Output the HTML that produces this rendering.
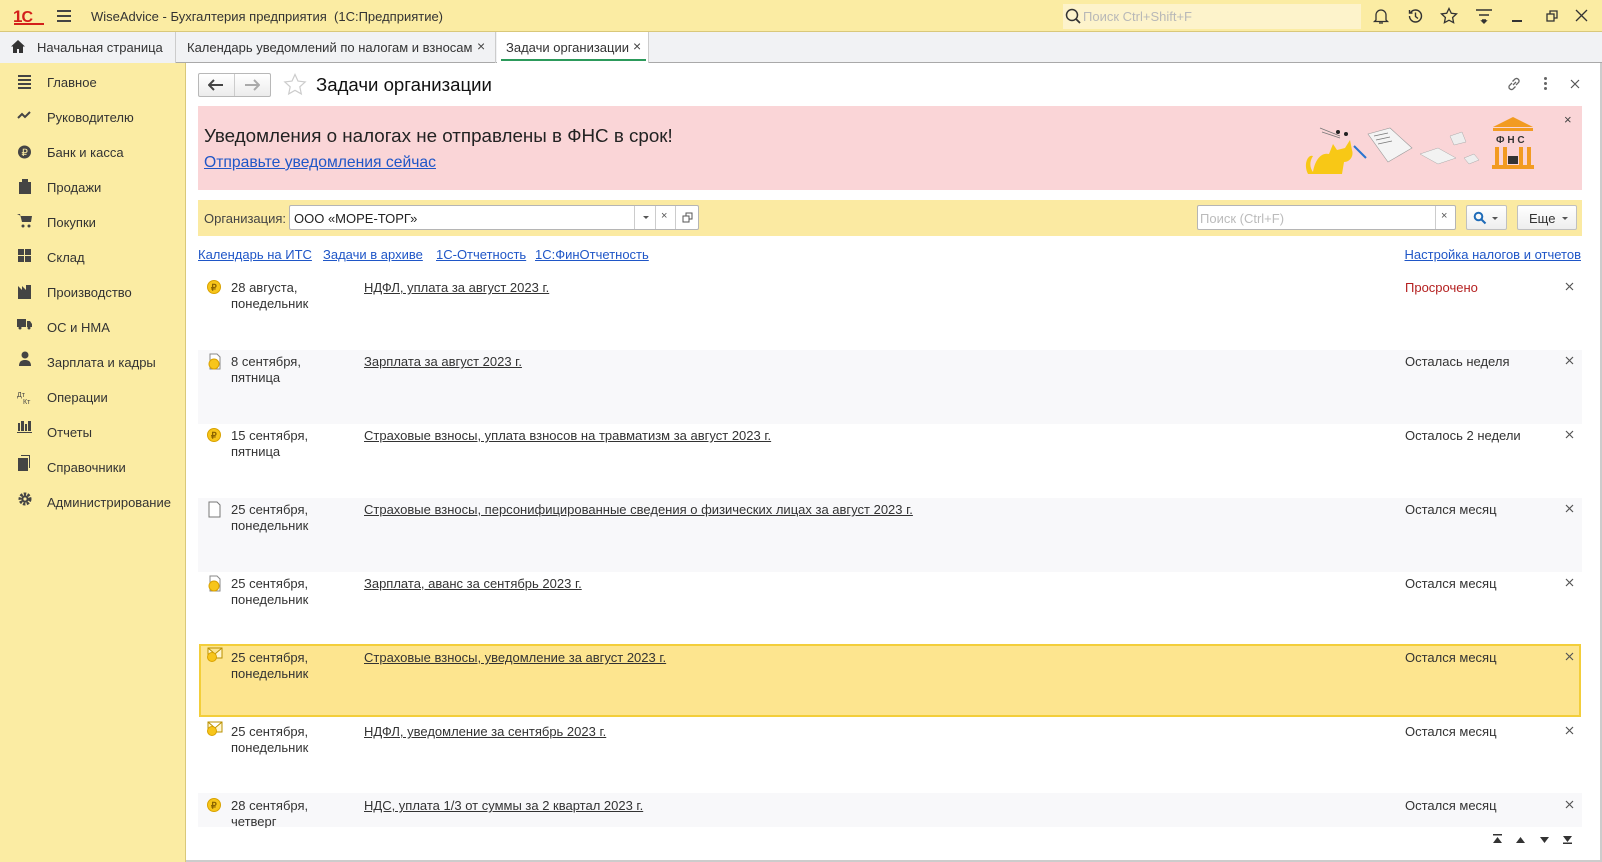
<!DOCTYPE html>
<html><head><meta charset="utf-8"><style>
*{margin:0;padding:0;box-sizing:border-box}
body{width:1602px;height:862px;overflow:hidden;background:#fff;font-family:"Liberation Sans","Noto Sans CJK SC",sans-serif;font-size:13px;color:#333;position:relative}
.a{position:absolute;white-space:nowrap}
a,.lk{color:#1f56c7;text-decoration:underline}
.ul{color:#333;text-decoration:underline}
svg{display:block}
</style></head><body>
<!-- top bar -->
<div class="a" style="left:0;top:0;width:1602px;height:32px;background:#fbeca3;border-bottom:1px solid #d9c87a"></div>
<div class="a" style="left:13px;top:7px;color:#d3201b;font-weight:bold;font-size:17px;letter-spacing:-1px">1<span style="font-size:16px">С</span></div>
<div class="a" style="left:14px;top:23px;width:30px;height:2px;background:#d3201b"></div>
<div class="a" style="left:57px;top:10px;width:14px;height:1.5px;background:#444;box-shadow:0 5px 0 #444,0 10px 0 #444"></div>
<div class="a" style="left:91px;top:9px;font-size:13px;color:#333">WiseAdvice - Бухгалтерия предприятия &nbsp;(1С:Предприятие)</div>
<div class="a" style="left:1063px;top:4px;width:298px;height:25px;background:#fdf3cb"></div>
<svg class="a" style="left:1065px;top:8px" width="16" height="16"><circle cx="7" cy="7" r="5.5" fill="none" stroke="#333" stroke-width="1.5"/><path d="M11 11L15 15" stroke="#333" stroke-width="1.8"/></svg>
<div class="a" style="left:1083px;top:9px;color:#b8b8b8;font-size:13px">Поиск Ctrl+Shift+F</div>
<svg class="a" style="left:1372px;top:7px" width="18" height="18" fill="none" stroke="#333" stroke-width="1.3"><path d="M4 13V8a5 5 0 0110 0v5l1.5 1.5h-13z M7 16h4"/></svg>
<svg class="a" style="left:1406px;top:7px" width="18" height="18" fill="none" stroke="#333" stroke-width="1.4"><path d="M3.5 9a6 6 0 106-6 6 6 0 00-5 2.7M3.5 3v3h3M9.5 5.5v4l2.5 2"/></svg>
<svg class="a" style="left:1440px;top:7px" width="18" height="18" fill="none" stroke="#333" stroke-width="1.3"><path d="M9 1.5l2.3 4.8 5.2.6-3.9 3.6 1 5.2L9 13.2l-4.6 2.5 1-5.2L1.5 6.9l5.2-.6z"/></svg>
<svg class="a" style="left:1475px;top:8px" width="18" height="16" fill="none" stroke="#333" stroke-width="1.4"><path d="M1 2h16M4 7h10M7 12h4"/><path d="M7 13l2 2 2-2z" fill="#333"/></svg>
<div class="a" style="left:1512px;top:20px;width:10px;height:1.5px;background:#333"></div>
<svg class="a" style="left:1546px;top:10px" width="12" height="12" fill="none" stroke="#333" stroke-width="1.3"><rect x="1" y="4" width="7" height="7"/><path d="M4 4V1h7v7H8"/></svg>
<svg class="a" style="left:1575px;top:9px" width="13" height="13" stroke="#333" stroke-width="1.3"><path d="M1 1l11 11M12 1L1 12"/></svg>
<!-- tabs -->
<div class="a" style="left:0;top:32px;width:1602px;height:31px;background:#f1f2f4;border-bottom:1px solid #a9a9a9"></div>
<div class="a" style="left:0;top:32px;width:176px;height:31px;border-right:1px solid #ccc;background:#f1f2f4"></div>
<svg class="a" style="left:11px;top:40px" width="14" height="13" fill="#333"><path d="M7 0L0 6.5h2V13h4V9h2v4h4V6.5h2z"/></svg>
<div class="a" style="left:37px;top:40px">Начальная страница</div>
<div class="a" style="left:176px;top:32px;width:320px;height:31px;border-right:1px solid #ccc"></div>
<div class="a" style="left:187px;top:40px">Календарь уведомлений по налогам и взносам</div>
<div class="a" style="left:477px;top:38px;font-size:14px;color:#444">×</div>
<div class="a" style="left:497px;top:32px;width:152px;height:31px;background:#fff;border-right:1px solid #ccc"></div>
<div class="a" style="left:501px;top:59px;width:145px;height:2px;background:#2c9a5b"></div>
<div class="a" style="left:506px;top:40px">Задачи организации</div>
<div class="a" style="left:633px;top:38px;font-size:14px;color:#444">×</div>
<!-- sidebar -->
<div class="a" style="left:0;top:63px;width:186px;height:799px;background:#fbeca3;border-right:1px solid #d9c87a"></div>
<div class="a" style="left:0;top:63px;width:186px;font-size:13px">
<div class="a" style="left:47px;top:12px">Главное</div>
<div class="a" style="left:47px;top:47px">Руководителю</div>
<div class="a" style="left:47px;top:82px">Банк и касса</div>
<div class="a" style="left:47px;top:117px">Продажи</div>
<div class="a" style="left:47px;top:152px">Покупки</div>
<div class="a" style="left:47px;top:187px">Склад</div>
<div class="a" style="left:47px;top:222px">Производство</div>
<div class="a" style="left:47px;top:257px">ОС и НМА</div>
<div class="a" style="left:47px;top:292px">Зарплата и кадры</div>
<div class="a" style="left:47px;top:327px">Операции</div>
<div class="a" style="left:47px;top:362px">Отчеты</div>
<div class="a" style="left:47px;top:397px">Справочники</div>
<div class="a" style="left:47px;top:432px">Администрирование</div>
</div>
<svg class="a" style="left:17px;top:74px" width="16" height="440" fill="#444">
<rect x="1" y="1" width="13" height="2"/><rect x="1" y="5" width="13" height="2"/><rect x="1" y="9" width="13" height="2"/><rect x="1" y="13" width="13" height="2"/>
<path d="M1 44l4-4 3 3 5-5" fill="none" stroke="#444" stroke-width="2"/>
<circle cx="7.5" cy="78" r="6.5"/><text x="4.5" y="82" font-size="10" fill="#fbeca3" font-family="Liberation Sans">₽</text>
<path d="M2 108h12v12H2z M5 108v-3h6v3"/>
<path d="M0 140h3l2 8h9l1-6H4" /><circle cx="6" cy="152" r="1.5"/><circle cx="12" cy="152" r="1.5"/>
<rect x="1" y="175" width="6" height="6"/><rect x="8" y="175" width="6" height="6"/><rect x="1" y="182" width="6" height="6"/><rect x="8" y="182" width="6" height="6"/>
<path d="M1 225V212l4 4v-4l4 4v-5h5v14z"/>
<path d="M0 245h9v8H0z M10 247h3l2 3v3h-5z"/><circle cx="3" cy="254" r="1.5"/><circle cx="12" cy="254" r="1.5"/>
<circle cx="8" cy="281" r="3.5"/><path d="M2 292c0-5 3-6 6-6s6 1 6 6z"/>
<text x="0" y="323" font-size="7" font-family="Liberation Sans">Дт</text><text x="6" y="330" font-size="7" font-family="Liberation Sans">Кт</text>
<path d="M1 357h2v-8h-2z M4 357h3v-10h-3z M8 357h2v-7h-2z M11 357h3v-10h-3z M0 358h15v1H0z"/>
<path d="M1 384h10v13H1z M4 381h9v13h-1V382H4z"/>
<circle cx="8" cy="425" r="5" fill="none" stroke="#444" stroke-width="3" stroke-dasharray="2.4 1.3"/><circle cx="8" cy="425" r="3.6"/><circle cx="8" cy="425" r="1.6" fill="#fbeca3"/>
</svg>
<!-- window header -->
<div class="a" style="left:198px;top:73px;width:73px;height:24px;border:1px solid #b8b8b8;border-radius:2px;background:linear-gradient(#fff,#ececec)"></div>
<div class="a" style="left:234px;top:74px;width:1px;height:22px;background:#ccc"></div>
<svg class="a" style="left:208px;top:79px" width="16" height="12"><path d="M1 6h14M6 1L1 6l5 5" fill="none" stroke="#444" stroke-width="2"/></svg>
<svg class="a" style="left:244px;top:79px" width="16" height="12"><path d="M1 6h14M10 1l5 5-5 5" fill="none" stroke="#aaa" stroke-width="2"/></svg>
<svg class="a" style="left:283px;top:73px" width="24" height="23"><path d="M12 1.5l3 6.6 7.2.8-5.4 4.9 1.5 7.1L12 17.3l-6.3 3.6 1.5-7.1L1.8 8.9 9 8.1z" fill="none" stroke="#ccc" stroke-width="1.2"/></svg>
<div class="a" style="left:316px;top:74px;font-size:18.6px;color:#111">Задачи организации</div>
<svg class="a" style="left:1506px;top:76px" width="16" height="16" fill="none" stroke="#666" stroke-width="1.3"><path d="M7 9l3-3M6 7L3.5 9.5a2.5 2.5 0 003.5 3.5L9.5 10.5M10 9l2.5-2.5A2.5 2.5 0 009 3L6.5 5.5"/></svg>
<div class="a" style="left:1544px;top:77px;width:3px;height:3px;background:#666;border-radius:50%;box-shadow:0 5px 0 #666,0 10px 0 #666"></div>
<svg class="a" style="left:1570px;top:79px" width="10" height="10" stroke="#555" stroke-width="1.2"><path d="M1 1l8 8M9 1L1 9"/></svg>
<!-- banner -->
<div class="a" style="left:198px;top:106px;width:1384px;height:84px;background:#fad5d7"></div>
<div class="a" style="left:204px;top:125px;font-size:18.8px;color:#222">Уведомления о налогах не отправлены в ФНС в срок!</div>
<div class="a lk" style="left:204px;top:154px;font-size:15.7px">Отправьте уведомления сейчас</div>
<div class="a" style="left:1564px;top:112px;font-size:13px;color:#444">×</div>
<svg class="a" style="left:1300px;top:116px" width="245" height="68">
<path d="M8 58c-5-10 0-20 5-18-4 6-3 12 0 16 2-12 8-20 16-18l4-10 4 6 8-2 5-8 2 10c2 6-2 12-8 12l-2 12H8z" fill="#f8c816"/>
<circle cx="38" cy="16" r="2" fill="#222"/><circle cx="46" cy="18" r="2" fill="#222"/>
<path d="M20 12l20 8M22 16l18 6" stroke="#777" stroke-width=".7"/>
<path d="M68 18l22-6 22 20-24 14z" fill="#f4f4f4" stroke="#999" stroke-width=".6"/>
<path d="M74 20l14-3M76 24l14-3M78 28l14-3" stroke="#777" stroke-width=".7"/>
<path d="M54 30l12 12" stroke="#2a74d0" stroke-width="2"/>
<path d="M120 38l18-6 18 10-18 6z" fill="#f2f2f2" stroke="#aaa" stroke-width=".5"/>
<path d="M150 20l12-4 4 10-12 3z" fill="#eee" stroke="#aaa" stroke-width=".5"/>
<path d="M164 42l10-4 5 6-10 4z" fill="#eee" stroke="#aaa" stroke-width=".5"/>
<path d="M193 11l20-10 20 10z" fill="#f29b21"/>
<rect x="193" y="12" width="40" height="3" fill="#f29b21"/>
<text x="196" y="27" font-size="10" font-weight="bold" fill="#333" font-family="Liberation Sans">Ф Н С</text>
<rect x="195" y="31" width="4" height="18" fill="#f29b21"/><rect x="203" y="31" width="4" height="18" fill="#f29b21"/><rect x="219" y="31" width="4" height="18" fill="#f29b21"/><rect x="227" y="31" width="4" height="18" fill="#f29b21"/>
<path d="M208 40h10v8h-10z" fill="#333"/>
<rect x="192" y="49" width="42" height="4" fill="#f29b21"/>
</svg>
<!-- filter bar -->
<div class="a" style="left:198px;top:200px;width:1384px;height:36px;background:#fbeaa2"></div>
<div class="a" style="left:204px;top:211px;color:#444">Организация:</div>
<div class="a" style="left:289px;top:205px;width:410px;height:25px;background:#fff;border:1px solid #b5b5b5;border-radius:2px"></div>
<div class="a" style="left:294px;top:211px;color:#222">ООО «МОРЕ-ТОРГ»</div>
<div class="a" style="left:634px;top:206px;width:1px;height:23px;background:#ccc"></div>
<div class="a" style="left:655px;top:206px;width:1px;height:23px;background:#ccc"></div>
<div class="a" style="left:675px;top:206px;width:1px;height:23px;background:#ccc"></div>
<div class="a" style="left:643px;top:216px;border:3px solid transparent;border-top:3px solid #555"></div>
<div class="a" style="left:661px;top:210px;font-size:11px;color:#555">×</div>
<svg class="a" style="left:682px;top:212px" width="11" height="11" fill="none" stroke="#555"><rect x="1" y="4" width="6" height="6"/><path d="M4 4V1h6v6H7"/></svg>
<div class="a" style="left:1197px;top:205px;width:259px;height:25px;background:#fff;border:1px solid #b5b5b5;border-radius:2px"></div>
<div class="a" style="left:1200px;top:211px;color:#bbb">Поиск (Ctrl+F)</div>
<div class="a" style="left:1435px;top:206px;width:1px;height:23px;background:#ccc"></div>
<div class="a" style="left:1441px;top:210px;font-size:11px;color:#555">×</div>
<div class="a" style="left:1466px;top:205px;width:41px;height:25px;background:linear-gradient(#fff,#eee);border:1px solid #c0c0c0;border-radius:2px"></div>
<svg class="a" style="left:1473px;top:211px" width="14" height="14" fill="none" stroke="#1e6bb8" stroke-width="2"><circle cx="5.5" cy="5.5" r="3.8"/><path d="M8.5 8.5l4 4"/></svg>
<div class="a" style="left:1492px;top:217px;border:3px solid transparent;border-top:3px solid #555"></div>
<div class="a" style="left:1517px;top:205px;width:60px;height:25px;background:linear-gradient(#fff,#eee);border:1px solid #c0c0c0;border-radius:2px"></div>
<div class="a" style="left:1529px;top:211px;color:#333">Еще</div>
<div class="a" style="left:1562px;top:217px;border:3px solid transparent;border-top:3px solid #555"></div>
<!-- links -->
<div class="a lk" style="left:198px;top:247px">Календарь на ИТС</div>
<div class="a lk" style="left:323px;top:247px">Задачи в архиве</div>
<div class="a lk" style="left:436px;top:247px">1С-Отчетность</div>
<div class="a lk" style="left:535px;top:247px">1С:ФинОтчетность</div>
<div class="a lk" style="right:21px;top:247px">Настройка налогов и отчетов</div>
<!-- rows -->
<div class="a" style="left:198px;top:350px;width:1384px;height:74px;background:#f8f8fa"></div>
<div class="a" style="left:198px;top:498px;width:1384px;height:74px;background:#f8f8fa"></div>
<div class="a" style="left:199px;top:644px;width:1382px;height:73px;background:#fde58f;border:2px solid #f3ce3a"></div>
<div class="a" style="left:198px;top:793px;width:1384px;height:34px;background:#f8f8fa"></div>
<div class="a" style="left:0;top:0;width:1602px">
<div class="a" style="left:231px;top:280px;line-height:16px">28 августа,<br>понедельник</div>
<div class="a ul" style="left:364px;top:280px">НДФЛ, уплата за август 2023 г.</div>
<div class="a" style="left:1405px;top:280px;color:#b41f1f">Просрочено</div>
<div class="a" style="left:231px;top:354px;line-height:16px">8 сентября,<br>пятница</div>
<div class="a ul" style="left:364px;top:354px">Зарплата за август 2023 г.</div>
<div class="a" style="left:1405px;top:354px">Осталась неделя</div>
<div class="a" style="left:231px;top:428px;line-height:16px">15 сентября,<br>пятница</div>
<div class="a ul" style="left:364px;top:428px">Страховые взносы, уплата взносов на травматизм за август 2023 г.</div>
<div class="a" style="left:1405px;top:428px">Осталось 2 недели</div>
<div class="a" style="left:231px;top:502px;line-height:16px">25 сентября,<br>понедельник</div>
<div class="a ul" style="left:364px;top:502px">Страховые взносы, персонифицированные сведения о физических лицах за август 2023 г.</div>
<div class="a" style="left:1405px;top:502px">Остался месяц</div>
<div class="a" style="left:231px;top:576px;line-height:16px">25 сентября,<br>понедельник</div>
<div class="a ul" style="left:364px;top:576px">Зарплата, аванс за сентябрь 2023 г.</div>
<div class="a" style="left:1405px;top:576px">Остался месяц</div>
<div class="a" style="left:231px;top:650px;line-height:16px">25 сентября,<br>понедельник</div>
<div class="a ul" style="left:364px;top:650px">Страховые взносы, уведомление за август 2023 г.</div>
<div class="a" style="left:1405px;top:650px">Остался месяц</div>
<div class="a" style="left:231px;top:724px;line-height:16px">25 сентября,<br>понедельник</div>
<div class="a ul" style="left:364px;top:724px">НДФЛ, уведомление за сентябрь 2023 г.</div>
<div class="a" style="left:1405px;top:724px">Остался месяц</div>
<div class="a" style="left:231px;top:798px;line-height:16px;height:30px;overflow:hidden">28 сентября,<br>четверг</div>
<div class="a ul" style="left:364px;top:798px">НДС, уплата 1/3 от суммы за 2 квартал 2023 г.</div>
<div class="a" style="left:1405px;top:798px">Остался месяц</div>
</div>
<svg class="a" style="left:1564px;top:280px" width="12" height="540" stroke="#555" stroke-width="1.2">
<path d="M2 3l7 7M9 3l-7 7"/><path d="M2 77l7 7M9 77l-7 7"/><path d="M2 151l7 7M9 151l-7 7"/><path d="M2 225l7 7M9 225l-7 7"/><path d="M2 299l7 7M9 299l-7 7"/><path d="M2 373l7 7M9 373l-7 7"/><path d="M2 447l7 7M9 447l-7 7"/><path d="M2 521l7 7M9 521l-7 7"/>
</svg>
<!-- row icons -->
<svg class="a" style="left:207px;top:280px" width="16" height="540">
<g font-family="Liberation Sans" font-size="9" font-weight="bold">
<circle cx="7" cy="7" r="6.5" fill="#f7c51a" stroke="#d9a200"/><text x="4" y="10.5" fill="#8a6200">₽</text>
<path d="M3 74h7l3 3v12H3z" fill="#fff" stroke="#888"/><circle cx="7" cy="84" r="5" fill="#f7c51a" stroke="#d9a200"/>
<circle cx="7" cy="155" r="6.5" fill="#f7c51a" stroke="#d9a200"/><text x="4" y="158.5" fill="#8a6200">₽</text>
<path d="M2 222h8l3 3v12H2z" fill="#fff" stroke="#777"/>
<path d="M3 296h7l3 3v12H3z" fill="#fff" stroke="#888"/><circle cx="7" cy="306" r="5" fill="#f7c51a" stroke="#d9a200"/>
<path d="M1 368h14v10H1z M1 368l7 6 7-6" fill="#fff6d0" stroke="#b99000"/><circle cx="5" cy="377" r="4.5" fill="#f7c51a" stroke="#d9a200"/>
<path d="M1 442h14v10H1z M1 442l7 6 7-6" fill="#fff6d0" stroke="#b99000"/><circle cx="5" cy="451" r="4.5" fill="#f7c51a" stroke="#d9a200"/>
<circle cx="7" cy="525" r="6.5" fill="#f7c51a" stroke="#d9a200"/><text x="4" y="528.5" fill="#8a6200">₽</text>
</g></svg>
<!-- bottom scroll buttons -->
<svg class="a" style="left:1492px;top:833px" width="84" height="12" fill="#333">
<path d="M1 1h9v1.5H1z M1 10l4.5-6 4.5 6z"/><path d="M24 10l4.5-6 4.5 6z"/><path d="M48 4l4.5 6 4.5-6z"/><path d="M71 3l4.5 6 4.5-6z M71 9.5h9V11h-9z"/>
</svg>
<div class="a" style="left:1600px;top:63px;width:2px;height:799px;background:#ccc"></div>
<div class="a" style="left:186px;top:860px;width:1416px;height:2px;background:#ccc"></div>
</body></html>
